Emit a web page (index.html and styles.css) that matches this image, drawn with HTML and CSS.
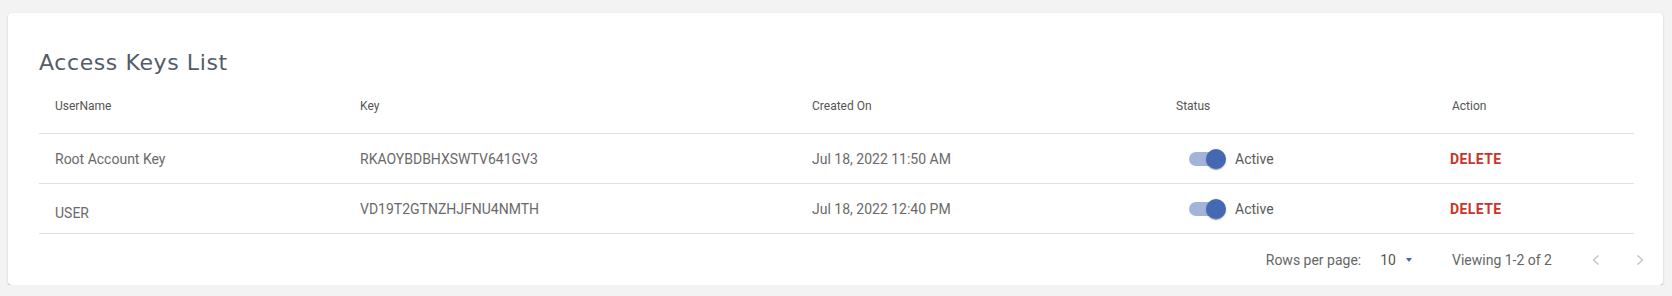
FILE: index.html
```html
<!DOCTYPE html>
<html lang="en">
<head>
<meta charset="utf-8">
<title>Access Keys List</title>
<link rel="stylesheet" href="styles.css">
</head>
<body>
<div class="card">
  <h2 class="title">Access Keys List</h2>
  <div class="table">
    <div class="row head">
      <div class="cell">UserName</div>
      <div class="cell">Key</div>
      <div class="cell">Created On</div>
      <div class="cell">Status</div>
      <div class="cell">Action</div>
    </div>
    <div class="row">
      <div class="cell">Root Account Key</div>
      <div class="cell">RKAOYBDBHXSWTV641GV3</div>
      <div class="cell">Jul 18, 2022 11:50 AM</div>
      <div class="cell status"><span class="switch"><span class="track"></span><span class="thumb"></span></span><span class="label">Active</span></div>
      <div class="cell"><button class="delete">Delete</button></div>
    </div>
    <div class="row">
      <div class="cell"><span class="low">USER</span></div>
      <div class="cell">VD19T2GTNZHJFNU4NMTH</div>
      <div class="cell">Jul 18, 2022 12:40 PM</div>
      <div class="cell status"><span class="switch"><span class="track"></span><span class="thumb"></span></span><span class="label">Active</span></div>
      <div class="cell"><button class="delete">Delete</button></div>
    </div>
  </div>
  <div class="footer">
    <span class="rpp">Rows per page:</span>
    <span class="select">10<span class="caret"></span></span>
    <span class="viewing">Viewing 1-2 of 2</span>
    <svg class="chev prev" width="10" height="12" viewBox="0 0 10 12"><polyline points="7.5,1.5 2.5,6 7.5,10.5" fill="none" stroke="#c4c4c4" stroke-width="1.4"/></svg>
    <svg class="chev next" width="10" height="12" viewBox="0 0 10 12"><polyline points="2.5,1.5 7.5,6 2.5,10.5" fill="none" stroke="#c4c4c4" stroke-width="1.4"/></svg>
  </div>
</div>
</body>
</html>
```

FILE: styles.css
```css
* { box-sizing: border-box; }
html, body { margin: 0; padding: 0; }
body {
  background: #f3f3f3;
  font-family: Roboto, "Liberation Sans", sans-serif;
  padding: 13px 9px 0 8px;
}
.card {
  background: #fff;
  border-radius: 4px;
  height: 272px;
  padding: 36px 18px 0 31px;
  box-shadow: 0 2px 1px -1px rgba(0,0,0,.2), 0 1px 1px 0 rgba(0,0,0,.14), 0 1px 3px 0 rgba(0,0,0,.12);
}
.title {
  margin: 0 0 2px 0;
  font-family: "DejaVu Sans", "Open Sans", sans-serif;
  font-weight: 400;
  font-size: 22px;
  letter-spacing: 0.6px;
  line-height: 28px;
  color: #535c68;
}
.table { width: 1595px; }
.row {
  display: grid;
  grid-template-columns: 305px 452px 364px 276px 198px;
  height: 50px;
  border-bottom: 1px solid #e0e0e0;
  align-items: center;
  font-size: 14px;
  color: #6a6a6a;
}
.row.head {
  height: 55px;
  font-size: 12px;
  color: #555;
}
.cell { padding: 0 16px; white-space: nowrap; }
.low { display: inline-block; padding-top: 8px; }
.status { display: flex; align-items: center; padding-left: 17px; }
.switch { position: relative; width: 58px; height: 38px; flex: none; }
.track {
  position: absolute; left: 12px; top: 12px; width: 34px; height: 14px;
  border-radius: 7px; background: #a3b4da;
}
.thumb {
  position: absolute; left: 29px; top: 9px; width: 20px; height: 20px;
  border-radius: 50%; background: #4469b3;
  box-shadow: 0 2px 1px -1px rgba(0,0,0,.2), 0 1px 1px 0 rgba(0,0,0,.14), 0 1px 3px 0 rgba(0,0,0,.12);
}
.label { color: #5a5a5a; }
.delete {
  border: 0; background: none; padding: 0; margin-left: -2px;
  font-family: Roboto, "Liberation Sans", sans-serif;
  font-weight: 700; font-size: 14px; letter-spacing: 0.4px;
  text-transform: uppercase; color: #c9352a;
}
.footer {
  height: 51px;
  display: flex;
  align-items: center;
  justify-content: flex-end;
  font-size: 14px;
  color: #666;
}
.select { margin-left: 19px; display: flex; align-items: center; color: #555; }
.caret {
  width: 0; height: 0; margin-left: 10px; margin-top: 1px;
  border-left: 3.5px solid transparent; border-right: 3.5px solid transparent;
  border-top: 4px solid #4469b3;
}
.viewing { margin-left: 40px; }
.prev { margin-left: 39px; }
.next { margin-left: 34px; }
```
